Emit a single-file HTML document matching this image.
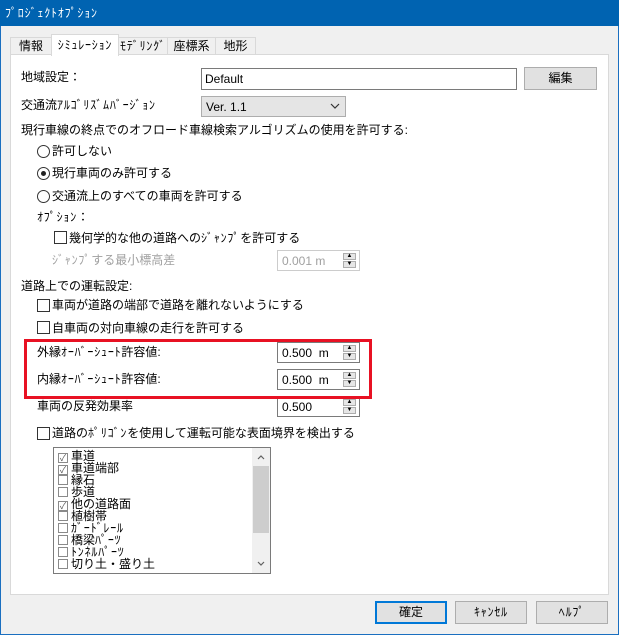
<!DOCTYPE html><html><head><meta charset="utf-8"><style>
*{box-sizing:border-box;margin:0;padding:0}
body{width:619px;height:635px;overflow:hidden;background:#f0f0f0;font-family:"Liberation Sans","Noto Sans CJK JP",sans-serif;font-size:12px;color:#000;position:relative}
.a{position:absolute;white-space:nowrap;line-height:14px}
.h{letter-spacing:0.8px}
#win{position:absolute;left:0;top:0;width:619px;height:635px;border:1px solid #1a6fc0;border-top:none}
#title{position:absolute;left:0;top:0;width:619px;height:26px;background:#0063b1;color:#fff}
.tab{position:absolute;top:37px;height:18px;border:1px solid #d9d9d9;border-bottom:none;background:#f0f0f0;text-align:center;line-height:16px;white-space:nowrap}
#panel{position:absolute;left:10px;top:54px;width:599px;height:541px;background:#fff;border:1px solid #d9d9d9}
.box{position:absolute;border:1px solid #7a7a7a;background:#fff}
.btn{position:absolute;background:#e1e1e1;border:1px solid #adadad;text-align:center;line-height:19px;white-space:nowrap}
.rad{position:absolute;width:13px;height:13px;border:1px solid #333;border-radius:50%;background:#fff}
.cb{position:absolute;width:13px;height:13px;border:1px solid #333;background:#fff}
.spin{position:absolute;width:83px;height:21px;border:1px solid #7a7a7a;background:#fff}
.spin span{position:absolute;left:4px;top:3px;line-height:14px}
.sb{position:absolute;right:3px;width:13px;height:7px;background:#e6e6e6;border:1px solid #adadad;font-size:6px;line-height:5px;text-align:center}
.li{position:absolute;left:4px;height:12px;line-height:12px;font-size:12px;white-space:nowrap}
.li i{display:inline-block;width:10px;height:10px;border:1px solid #8a8a8a;vertical-align:-1px;margin-right:3px;font-style:normal;font-size:9px;line-height:8px;color:#555;text-align:center}
.gray{color:#a0a0a0}
</style></head><body>
<div id="win"></div>
<div id="title"><div class="a h" style="left:5px;top:6px;color:#fff">ﾌﾟﾛｼﾞｪｸﾄｵﾌﾟｼｮﾝ</div></div>
<div class="tab" style="left:10px;width:42px">情報</div>
<div class="tab h" style="left:118px;width:50px">ﾓﾃﾞﾘﾝｸﾞ</div>
<div class="tab" style="left:167px;width:49px">座標系</div>
<div class="tab" style="left:215px;width:41px">地形</div>
<div id="panel"></div>
<div class="tab h" style="left:51px;top:34px;width:68px;height:22px;background:#fff;z-index:2;line-height:20px">ｼﾐｭﾚｰｼｮﾝ</div>

<div class="a" style="left:21px;top:70px">地域設定：</div>
<div class="box" style="left:201px;top:68px;width:316px;height:22px"><span class="a" style="left:3px;top:3px">Default</span></div>
<div class="btn" style="left:524px;top:67px;width:73px;height:23px;line-height:21px">編集</div>

<div class="a" style="left:21px;top:98px">交通流<span class="h">ｱﾙｺﾞﾘｽﾞﾑﾊﾞｰｼﾞｮﾝ</span></div>
<div style="position:absolute;left:201px;top:96px;width:145px;height:21px;background:#e5e5e5;border:1px solid #adadad"><span class="a" style="left:4px;top:3px">Ver. 1.1</span>
<svg style="position:absolute;left:128px;top:6px" width="10" height="7"><path d="M1 1 L5 5 L9 1" fill="none" stroke="#333" stroke-width="1.2"/></svg></div>

<div class="a" style="left:21px;top:123px">現行車線の終点でのオフロード車線検索アルゴリズムの使用を許可する:</div>
<div class="rad" style="left:37px;top:145px"></div><div class="a" style="left:52px;top:144px">許可しない</div>
<div class="rad" style="left:37px;top:167px"><div style="position:absolute;left:3px;top:3px;width:5px;height:5px;border-radius:50%;background:#222"></div></div><div class="a" style="left:52px;top:166px">現行車両のみ許可する</div>
<div class="rad" style="left:37px;top:190px"></div><div class="a" style="left:52px;top:189px">交通流上のすべての車両を許可する</div>
<div class="a" style="left:37px;top:210px"><span class="h">ｵﾌﾟｼｮﾝ</span>：</div>
<div class="cb" style="left:54px;top:231px"></div><div class="a" style="left:69px;top:231px">幾何学的な他の道路への<span class="h">ｼﾞｬﾝﾌﾟ</span>を許可する</div>
<div class="a gray" style="left:52px;top:253px"><span class="h">ｼﾞｬﾝﾌﾟ</span>する最小標高差</div>
<div class="spin" style="left:277px;top:250px;border-color:#ccc"><span class="gray">0.001 m</span><div class="sb" style="top:2px">▲</div><div class="sb" style="top:10px">▼</div></div>

<div class="a" style="left:21px;top:279px">道路上での運転設定:</div>
<div class="cb" style="left:37px;top:299px"></div><div class="a" style="left:52px;top:298px">車両が道路の端部で道路を離れないようにする</div>
<div class="cb" style="left:37px;top:321px"></div><div class="a" style="left:52px;top:321px">自車両の対向車線の走行を許可する</div>

<div class="a" style="left:37px;top:345px">外縁<span class="h">ｵｰﾊﾞｰｼｭｰﾄ</span>許容値:</div>
<div class="spin" style="left:277px;top:342px"><span>0.500&nbsp; m</span><div class="sb" style="top:2px">▲</div><div class="sb" style="top:10px">▼</div></div>
<div class="a" style="left:37px;top:372px">内縁<span class="h">ｵｰﾊﾞｰｼｭｰﾄ</span>許容値:</div>
<div class="spin" style="left:277px;top:369px"><span>0.500&nbsp; m</span><div class="sb" style="top:2px">▲</div><div class="sb" style="top:10px">▼</div></div>
<div class="a" style="left:37px;top:399px">車両の反発効果率</div>
<div class="spin" style="left:277px;top:396px"><span>0.500</span><div class="sb" style="top:2px">▲</div><div class="sb" style="top:10px">▼</div></div>
<div style="position:absolute;left:24px;top:339px;width:348px;height:60px;border:3px solid #e81123"></div>

<div class="cb" style="left:37px;top:427px"></div><div class="a" style="left:52px;top:426px">道路の<span class="h">ﾎﾟﾘｺﾞﾝ</span>を使用して運転可能な表面境界を検出する</div>

<div class="box" style="left:53px;top:447px;width:218px;height:127px;overflow:hidden">
<div class="li" style="top:2px"><i>✓</i>車道</div>
<div class="li" style="top:14px"><i>✓</i>車道端部</div>
<div class="li" style="top:26px"><i></i>縁石</div>
<div class="li" style="top:38px"><i></i>歩道</div>
<div class="li" style="top:50px"><i>✓</i>他の道路面</div>
<div class="li" style="top:62px"><i></i>植樹帯</div>
<div class="li" style="top:74px"><i></i><span class="h">ｶﾞｰﾄﾞﾚｰﾙ</span></div>
<div class="li" style="top:86px"><i></i>橋梁<span class="h">ﾊﾟｰﾂ</span></div>
<div class="li" style="top:98px"><i></i><span class="h">ﾄﾝﾈﾙﾊﾟｰﾂ</span></div>
<div class="li" style="top:110px"><i></i>切り土・盛り土</div>
<div style="position:absolute;left:198px;top:0;width:18px;height:125px;background:#f0f0f0">
<div style="position:absolute;left:0;top:18px;width:16px;height:67px;background:#cdcdcd;margin-left:1px"></div>
<svg style="position:absolute;left:5px;top:7px" width="8" height="5"><path d="M1 4L4 1L7 4" fill="none" stroke="#606060" stroke-width="1.2"/></svg>
<svg style="position:absolute;left:5px;top:113px" width="8" height="5"><path d="M1 1L4 4L7 1" fill="none" stroke="#606060" stroke-width="1.2"/></svg>
</div></div>

<div class="btn" style="left:375px;top:601px;width:72px;height:23px;border:2px solid #0078d7;line-height:19px">確定</div>
<div class="btn h" style="left:455px;top:601px;width:72px;height:23px;line-height:21px">ｷｬﾝｾﾙ</div>
<div class="btn h" style="left:536px;top:601px;width:72px;height:23px;line-height:21px">ﾍﾙﾌﾟ</div>
</body></html>
